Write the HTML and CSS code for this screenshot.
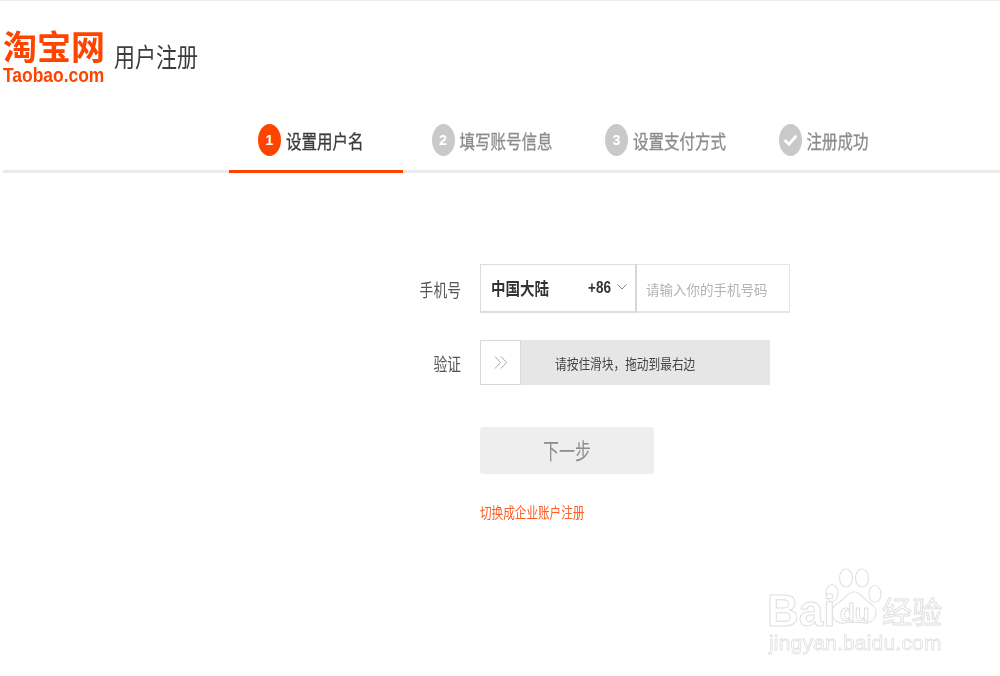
FILE: index.html
```html
<!DOCTYPE html>
<html lang="zh">
<head>
<meta charset="utf-8">
<title>用户注册</title>
<link rel="stylesheet" href="styles.css">
</head>
<body>
<div class="page">
  <header class="top">
    <div class="logo">
      <div class="logo-cn">淘宝网</div>
      <div class="logo-en">Taobao.com</div>
    </div>
    <h1 class="title">用户注册</h1>
  </header>
  <nav class="steps">
    <div class="step active"><span class="dot">1</span><span class="step-text">设置用户名</span></div>
    <div class="step"><span class="dot">2</span><span class="step-text">填写账号信息</span></div>
    <div class="step"><span class="dot">3</span><span class="step-text">设置支付方式</span></div>
    <div class="step"><span class="dot"><svg class="check" viewBox="0 0 14 12" width="15" height="14"><path d="M1.5 6 L5.5 10 L12.5 2" fill="none" stroke="#fff" stroke-width="2.6"/></svg></span><span class="step-text">注册成功</span></div>
  </nav>
  <main class="form">
    <div class="row row-phone">
      <span class="label">手机号</span>
      <div class="phone">
        <div class="region">
          <span class="region-name">中国大陆</span>
          <span class="code">+86</span>
          <svg class="chev" viewBox="0 0 10 6" width="10" height="6"><path d="M.5 .5 L5 5 L9.5 .5" fill="none" stroke="#888" stroke-width="1"/></svg>
        </div>
        <div class="phone-input">请输入你的手机号码</div>
      </div>
    </div>
    <div class="row row-verify">
      <span class="label">验证</span>
      <div class="slider">
        <div class="knob"><svg viewBox="0 0 14 14" width="14" height="15"><path d="M1 1 L6.5 7 L1 13 M7 1 L12.5 7 L7 13" fill="none" stroke="#a9a9a9" stroke-width="1"/></svg></div>
        <div class="slider-text">请按住滑块，拖动到最右边</div>
      </div>
    </div>
    <div class="next"><span class="next-text">下一步</span></div>
    <a class="switch" href="#">切换成企业账户注册</a>
  </main>
  <div class="watermark">
    <svg class="paw" viewBox="0 0 60 58" width="60" height="58">
      <g fill="#fff" stroke="#e2e2e2" stroke-width="1.2">
        <ellipse cx="8" cy="25" rx="6" ry="8.5"/>
        <ellipse cx="22" cy="10" rx="6.5" ry="9"/>
        <ellipse cx="38" cy="10" rx="6.5" ry="9"/>
        <ellipse cx="51" cy="26" rx="6" ry="8.5"/>
        <path d="M30 24 C23 24 21 31 14 35 C3 42 8 56 20 55 C26 54 34 54 40 55 C52 56 57 42 46 35 C39 31 37 24 30 24 Z"/>
      </g>
    </svg>
    <div class="wm-bai">Bai</div>
    <div class="wm-du">du</div>
    <div class="wm-cn">经验</div>
    <div class="wm-url">jingyan.baidu.com</div>
  </div>
</div>
</body>
</html>
```
FILE: styles.css
```css
* { box-sizing: border-box; }
html, body { margin: 0; padding: 0; background: #fff; }
body { font-family: "Noto Sans CJK SC", "Liberation Sans", sans-serif; overflow: hidden; }
.page { position: relative; width: 1000px; height: 676px; border-top: 1px solid #eee; overflow: hidden; }

.top { display: flex; align-items: flex-start; height: 99px; padding: 26px 0 0 3px; }
.logo { width: 102px; color: #ff4400; filter: blur(.3px); }
.logo-cn { font-size: 34px; line-height: 38px; font-weight: 700; white-space: nowrap; }
.logo-en { margin-top: 1px; font-family: "Liberation Sans", sans-serif; font-size: 21px; line-height: 18px; font-weight: 700; white-space: nowrap; transform-origin: left center; transform: scaleX(.83); }
.title { margin: 13px 0 0 9px; font-size: 21px; line-height: 32px; font-weight: 400; color: #3c3c3c; transform: scaleY(1.25); filter: blur(.3px); }

.steps { display: flex; height: 73px; margin-left: 3px; padding-left: 226px; border-bottom: 3px solid #ebebeb; }
.step { display: flex; align-items: center; gap: 5px; width: 173.5px; height: 73px; padding: 9px 0 0 29px; border-bottom: 3px solid transparent; color: #8c8c8c; }
.step.active { border-bottom-color: #ff4400; color: #3c3c3c; }
.dot { display: flex; align-items: center; justify-content: center; width: 23px; height: 32px; border-radius: 50%; background: #c9c9c9; color: #fff; font: 700 14px "Liberation Sans", sans-serif; }
.active .dot { background: #ff4400; }
.step-text { font-size: 15.5px; line-height: 22px; white-space: nowrap; -webkit-text-stroke: .25px currentColor; transform: scaleY(1.25); filter: blur(.3px); }

.form { padding: 91px 0 0 480px; }
.row { position: relative; display: flex; align-items: center; }
.label { position: absolute; right: calc(100% + 19px); font-size: 13.8px; line-height: 22px; color: #555; white-space: nowrap; transform: scaleY(1.3); filter: blur(.3px); }
.row-phone { height: 49px; }
.row-verify { height: 45px; margin-top: 27px; }
.phone { display: flex; height: 49px; width: 310px; }
.region { display: flex; align-items: center; width: 157px; height: 49px; padding: 0 8px 2px 10px; border: 1px solid #ddd; border-right: 2px solid #d6d6d6; border-bottom-width: 2px; }
.region-name { font-size: 14.5px; font-weight: 700; color: #333; transform: scaleY(1.2); filter: blur(.3px); }
.code { margin-left: auto; font: 700 13.5px "Liberation Sans", sans-serif; color: #333; transform: scaleY(1.2); filter: blur(.3px); }
.chev { margin-left: 6px; }
.phone-input { flex: 1; display: flex; align-items: center; padding: 2px 0 0 9px; border: 1px solid #e6e6e6; border-left: 0; border-bottom-width: 2px; font-size: 13.5px; color: #b3b3b3; white-space: nowrap; transform-origin: center; filter: blur(.3px); }
.slider { display: flex; width: 290px; height: 45px; background: #e6e6e6; }
.knob { display: flex; align-items: center; justify-content: center; width: 41px; height: 45px; background: #fff; border: 1px solid #d8d8d8; }
.slider-text { padding-left: 34px; line-height: 45px; font-size: 11.7px; color: #444; white-space: nowrap; transform-origin: left center; transform: scaleY(1.2); filter: blur(.3px); }
.next { display: flex; align-items: center; justify-content: center; width: 174px; height: 47px; margin-top: 42px; padding-bottom: 2px; border-radius: 3px; background: #eee; color: #8c8c8c; filter: blur(.3px); }
.next-text { font-size: 16px; transform: scaleY(1.35); }
.switch { display: block; margin-top: 28px; font-size: 11.6px; line-height: 20px; color: #ff5a1f; text-decoration: none; white-space: nowrap; transform: scaleY(1.25); filter: blur(.3px); }

.watermark { position: absolute; left: 767px; top: 567px; width: 180px; height: 90px; filter: blur(.3px); color: #fff; }
.paw { position: absolute; left: 57px; top: 0; }
.wm-bai { position: absolute; left: 0; top: 22px; -webkit-text-stroke: 1px #e0e0e0; font: 700 44px "Liberation Sans", sans-serif; line-height: 42px; white-space: nowrap; }
.wm-du { position: absolute; left: 73px; top: 33px; -webkit-text-stroke: 1px #e0e0e0; font: 700 24px "Liberation Sans", sans-serif; line-height: 24px; white-space: nowrap; }
.wm-cn { position: absolute; left: 115px; top: 24px; -webkit-text-stroke: 1px #e0e0e0; font: 400 30px "Noto Sans CJK SC", sans-serif; line-height: 36px; white-space: nowrap; }
.wm-url { position: absolute; left: 2px; top: 63px; font: 400 21px "Liberation Sans", sans-serif; line-height: 24px; -webkit-text-stroke: .8px #e0e0e0; white-space: nowrap; letter-spacing: .2px; }
```
